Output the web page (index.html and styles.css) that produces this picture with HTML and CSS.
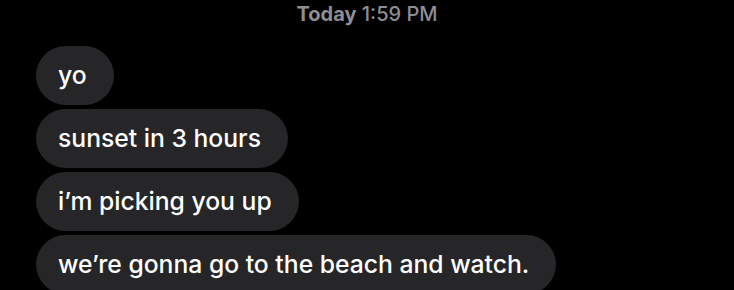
FILE: index.html
```html
<!DOCTYPE html>
<html lang="en">
<head>
  <meta charset="UTF-8">
  <title>Messages</title>
  <link rel="stylesheet" href="styles.css">
</head>
<body>
  <div id="thread">
    <div class="timestamp"><b>Today</b> 1:59 PM</div>
    <div class="messages">
      <div class="bubble">yo</div>
      <div class="bubble">sunset in 3 hours</div>
      <div class="bubble">i’m picking you up</div>
      <div class="bubble">we’re gonna go to the beach and watch.</div>
    </div>
  </div>
</body>
</html>
```

FILE: styles.css
```css
body {
  margin: 0;
  padding: 0;
  background: #000;
  font-family: Inter, "Liberation Sans", Arial, sans-serif;
  overflow: hidden;
}

#thread {
  height: 290px;
}

.timestamp {
  text-align: center;
  color: #8e8e93;
  font-size: 20px;
  font-weight: 500;
  line-height: 22px;
  padding-top: 3px;
  height: 46px;
  box-sizing: border-box;
}

.timestamp b {
  font-weight: 700;
}

.messages {
  display: flex;
  flex-direction: column;
  align-items: flex-start;
  gap: 4px;
  padding-left: 36px;
}

.bubble {
  background: #262628;
  color: #fff;
  font-size: 24.7px;
  font-weight: 500;
  height: 59px;
  line-height: 59px;
  padding: 0 27px 0 22px;
  border-radius: 30px;
  white-space: nowrap;
}
```
